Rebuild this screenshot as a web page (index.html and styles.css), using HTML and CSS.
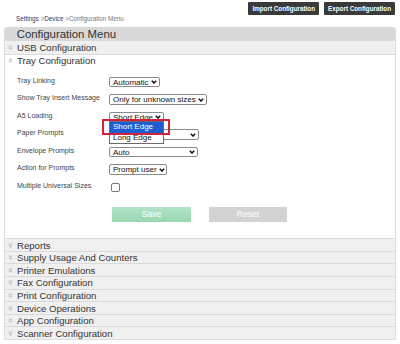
FILE: index.html
```html
<!DOCTYPE html>
<html lang="en">
<head>
<meta charset="utf-8">
<title>Configuration Menu</title>
<link rel="stylesheet" href="styles.css">
</head>
<body>
<div class="toolbar">
  <button class="tbtn">Import Configuration</button>
  <button class="tbtn">Export Configuration</button>
</div>
<div class="crumbs"><a class="crumb-link">Settings</a> &gt;<a class="crumb-link">Device</a> &gt;<span>Configuration Menu</span></div>
<div class="panel">
  <div class="panel-head">Configuration Menu</div>
  <div class="sec"><svg class="chev" viewBox="0 0 6 6"><polyline points="1,0.8 3,2.3 5,0.8"/><polyline points="1,3.3 3,4.8 5,3.3"/></svg>USB Configuration</div>
  <div class="sec open"><svg class="chev" viewBox="0 0 6 6"><polyline points="1,2.7 3,1.2 5,2.7"/><polyline points="1,5.2 3,3.7 5,5.2"/></svg>Tray Configuration</div>
  <div class="form">
    <div class="frow"><span class="lbl">Tray Linking</span><span class="sel w-auto">Automatic<svg class="arr" viewBox="0 0 6 4"><polyline points="0.8,0.8 3,3 5.2,0.8"/></svg></span></div>
    <div class="frow"><span class="lbl">Show Tray Insert Message</span><span class="sel w-only">Only for unknown sizes<svg class="arr" viewBox="0 0 6 4"><polyline points="0.8,0.8 3,3 5.2,0.8"/></svg></span></div>
    <div class="frow"><span class="lbl">A5 Loading</span><span class="sel-wrap"><span class="sel w-short">Short Edge<svg class="arr" viewBox="0 0 6 4"><polyline points="0.8,0.8 3,3 5.2,0.8"/></svg></span>
      <span class="popup"><span class="opt hl">Short Edge</span><span class="opt">Long Edge</span></span>
      <span class="redbox"></span></span></div>
    <div class="frow"><span class="lbl">Paper Prompts</span><span class="sel w-paper"><span class="hidden-val"></span><svg class="arr" viewBox="0 0 6 4"><polyline points="0.8,0.8 3,3 5.2,0.8"/></svg></span></div>
    <div class="frow"><span class="lbl">Envelope Prompts</span><span class="sel w-env">Auto<svg class="arr" viewBox="0 0 6 4"><polyline points="0.8,0.8 3,3 5.2,0.8"/></svg></span></div>
    <div class="frow"><span class="lbl">Action for Prompts</span><span class="sel w-prompt">Prompt user<svg class="arr" viewBox="0 0 6 4"><polyline points="0.8,0.8 3,3 5.2,0.8"/></svg></span></div>
    <div class="frow"><span class="lbl">Multiple Universal Sizes</span><input class="cb" type="checkbox"></div>
    <div class="actions"><button class="abtn save">Save</button><button class="abtn reset">Reset</button></div>
  </div>
  <div class="sec"><svg class="chev" viewBox="0 0 6 6"><polyline points="1,0.8 3,2.3 5,0.8"/><polyline points="1,3.3 3,4.8 5,3.3"/></svg>Reports</div>
  <div class="sec"><svg class="chev" viewBox="0 0 6 6"><polyline points="1,0.8 3,2.3 5,0.8"/><polyline points="1,3.3 3,4.8 5,3.3"/></svg>Supply Usage And Counters</div>
  <div class="sec"><svg class="chev" viewBox="0 0 6 6"><polyline points="1,0.8 3,2.3 5,0.8"/><polyline points="1,3.3 3,4.8 5,3.3"/></svg>Printer Emulations</div>
  <div class="sec"><svg class="chev" viewBox="0 0 6 6"><polyline points="1,0.8 3,2.3 5,0.8"/><polyline points="1,3.3 3,4.8 5,3.3"/></svg>Fax Configuration</div>
  <div class="sec"><svg class="chev" viewBox="0 0 6 6"><polyline points="1,0.8 3,2.3 5,0.8"/><polyline points="1,3.3 3,4.8 5,3.3"/></svg>Print Configuration</div>
  <div class="sec"><svg class="chev" viewBox="0 0 6 6"><polyline points="1,0.8 3,2.3 5,0.8"/><polyline points="1,3.3 3,4.8 5,3.3"/></svg>Device Operations</div>
  <div class="sec"><svg class="chev" viewBox="0 0 6 6"><polyline points="1,0.8 3,2.3 5,0.8"/><polyline points="1,3.3 3,4.8 5,3.3"/></svg>App Configuration</div>
  <div class="sec"><svg class="chev" viewBox="0 0 6 6"><polyline points="1,0.8 3,2.3 5,0.8"/><polyline points="1,3.3 3,4.8 5,3.3"/></svg>Scanner Configuration</div>
</div>
</body>
</html>
```
FILE: styles.css
```css
* { box-sizing: border-box; }
html, body { margin: 0; padding: 0; background: #fff; }
body {
  font-family: "Liberation Sans", Arial, sans-serif;
  color: #333;
  width: 400px;
  height: 344px;
  overflow: hidden;
}
.toolbar {
  display: flex;
  justify-content: flex-end;
  gap: 5px;
  padding: 2px 5px 0 0;
  height: 15px;
}
.tbtn {
  height: 13px;
  margin: 0;
  border: none;
  border-radius: 1px;
  background: #3a3a3a;
  color: #fff;
  font-family: inherit;
  font-weight: bold;
  font-size: 6.3px;
  padding: 0 4px;
  line-height: 13px;
}
.crumbs {
  padding-left: 16px;
  font-size: 6.3px;
  line-height: 8px;
  height: 8px;
  margin-bottom: 4px;
  color: #777;
}
.crumb-link { color: #2b3a6b; }
.panel {
  margin: 0 4px;
  border: 1px solid #dcdcdc;
  border-top: none;
  border-radius: 2px 2px 0 0;
}
.panel-head {
  height: 14px;
  background: #d8d8d8;
  font-size: 11.4px;
  line-height: 14px;
  padding-left: 11.7px;
  color: #333;
  border-radius: 2px 2px 0 0;
}
.sec {
  height: 12.6px;
  display: flex;
  align-items: center;
  gap: 4px;
  padding-left: 3px;
  background: #f0f0f0;
  border-top: 1px solid #dadada;
  font-size: 9.6px;
  color: #333;
}
.panel-head + .sec { border-top: none; }
.sec.open { background: #fff; }
.chev {
  width: 5px;
  height: 5px;
  fill: none;
  stroke: #999;
  stroke-width: 0.9;
  flex: none;
}
.form {
  padding: 9.8px 0 16.3px 12px;
}
.frow {
  display: flex;
  align-items: flex-start;
  height: 17.5px;
}
.lbl {
  width: 92px;
  flex: none;
  font-size: 7px;
  line-height: 9px;
  color: #444;
}
.sel-wrap { position: relative; display: inline-flex; margin-top: 1px; }
.sel {
  display: inline-flex;
  align-items: center;
  justify-content: space-between;
  height: 10.5px;
  margin-top: 1px;
  padding: 0 2px 0 3px;
  border: 1px solid #8a8a8a;
  border-radius: 2px;
  background: #fff;
  font-size: 8px;
  color: #111;
  white-space: nowrap;
}
.sel-wrap .sel { margin-top: 0; }
.arr {
  width: 6px;
  height: 4px;
  fill: none;
  stroke: #111;
  stroke-width: 1.5;
  margin-left: 2px;
  flex: none;
}
.w-auto { width: 51px; }
.w-only { width: 98px; }
.w-short { width: 55px; }
.w-paper { width: 90px; }
.w-env { width: 89px; }
.w-prompt { width: 58px; }
.popup {
  position: absolute;
  left: 0;
  top: 9.5px;
  width: 55px;
  display: flex;
  flex-direction: column;
  background: #fff;
  border: 1px solid #6a6a6a;
  z-index: 2;
}
.opt {
  height: 10.3px;
  line-height: 10.3px;
  font-size: 8px;
  padding-left: 3px;
  color: #111;
  white-space: nowrap;
}
.opt.hl { background: #1d5fd1; color: #fff; }
.redbox {
  position: absolute;
  left: -7px;
  top: 7px;
  width: 68px;
  height: 16.5px;
  border: 2px solid #d3213c;
  z-index: 3;
}
.cb {
  appearance: none;
  -webkit-appearance: none;
  width: 9px;
  height: 9px;
  margin: 2px 0 0 2px;
  border: 1px solid #777;
  border-radius: 2px;
  background: #fff;
}
.actions {
  display: flex;
  gap: 18px;
  margin-top: 8.5px;
  padding-left: 95.3px;
}
.abtn {
  width: 78.5px;
  height: 15px;
  margin: 0;
  border: none;
  font-family: inherit;
  font-size: 8.6px;
  color: #fff;
  padding: 0;
}
.save { background: linear-gradient(#b3e3c8, #98d6b3); }
.reset { background: #d3d3d3; }
```
